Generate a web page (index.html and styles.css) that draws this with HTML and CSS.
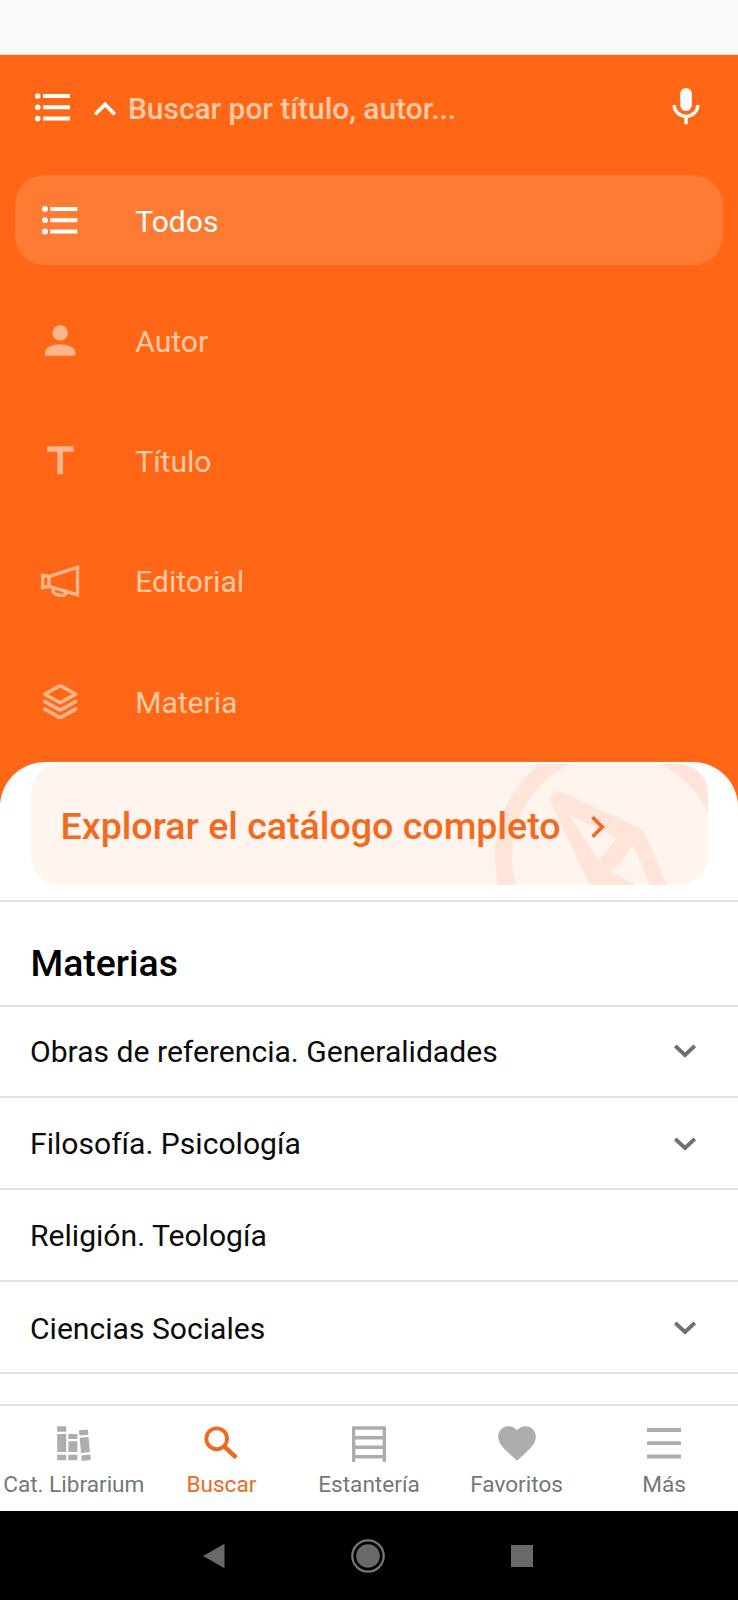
FILE: index.html
```html
<!DOCTYPE html>
<html lang="es">
<head>
<meta charset="utf-8">
<title>Buscar</title>
<link rel="stylesheet" href="styles.css">
</head>
<body>
<div class="screen">
  <div class="status-bar"></div>
  <section class="search-panel">
    <header class="search-bar">
      <svg class="icon-list" width="36" height="30" viewBox="0 0 36 30" fill="currentColor"><circle cx="2.700" cy="4" r="2.800"/><circle cx="2.700" cy="15.300" r="2.800"/><circle cx="2.700" cy="26.600" r="2.800"/><path d="M8 2H35V6H8zM8 13.300H35V17.300H8zM8 24.600H35V28.600H8z"/></svg>
      <svg class="icon-up" width="24" height="16" viewBox="0 0 24 16" fill="none" stroke="currentColor" stroke-width="3.700"><path d="M2.200 13.200 12 3.400l9.800 9.800"/></svg>
      <span class="search-hint">Buscar por título, autor...</span>
      <svg class="icon-mic" width="28" height="38" viewBox="0 0 28 38"><rect x="8.200" y="1" width="11.600" height="23" rx="5.800" fill="currentColor"/><path d="M2.200 18a11.800 11.300 0 0 0 23.600 0M14 29v8.300" fill="none" stroke="currentColor" stroke-width="3.300"/></svg>
    </header>
    <ul class="filters">
      <li class="filter filter-active"><svg width="40" height="40" viewBox="0 0 40 40" fill="currentColor"><circle cx="5" cy="8.900" r="2.900"/><circle cx="5" cy="20.200" r="2.900"/><circle cx="5" cy="31.500" r="2.900"/><path d="M10.300 6.900h27v4h-27zM10.300 18.200h27v4h-27zM10.300 29.500h27v4h-27z"/></svg><span>Todos</span></li>
      <li class="filter"><svg width="40" height="40" viewBox="0 0 40 40" fill="currentColor"><circle cx="20.200" cy="12.900" r="7.700"/><path d="M5 35.700v-3.800c0-5 10.100-7.700 15.200-7.700s15.100 2.700 15.100 7.700v3.800z"/></svg><span>Autor</span></li>
      <li class="filter"><svg width="40" height="40" viewBox="0 0 40 40" fill="currentColor"><path d="M7 5.200h26.500v5.500H23v22.500h-5.700V10.700H7z"/></svg><span>Título</span></li>
      <li class="filter"><svg width="40" height="40" viewBox="0 0 40 40" fill="none" stroke="currentColor" stroke-width="3.300"><path d="M2.700 14.500 9 15.500 37.500 6.300V33.700L9 25.500l-6.300 1zM9 15v11M13 26.500v3.500c0 3.500 9.500 5.500 12 3.500l2.200-3.500"/></svg><span>Editorial</span></li>
      <li class="filter"><svg width="40" height="40" viewBox="0 0 40 40" fill="none" stroke="currentColor" stroke-width="3.600" stroke-linecap="round" stroke-linejoin="round"><path d="M4.800 13.200 18.800 5.400q1.400-.7 2.800 0l14 7.800-14 7.800q-1.400.7-2.800 0zM4.800 20.700l14 7.700q1.400.7 2.800 0l14-7.700M4.800 28.200l14 7.700q1.400.7 2.800 0l14-7.700"/></svg><span>Materia</span></li>
    </ul>
  </section>
  <main class="sheet">
    <a class="explore">
      <svg class="compass" width="240" height="121" viewBox="0 0 240 121"><circle cx="120" cy="93" r="111.500" fill="none" stroke="currentColor" stroke-width="17"/><path fill="currentColor" fill-rule="evenodd" d="M56 39C52 30 60 25.500 68 28.500L143 63.500Q148 66 150.500 71L172 121H95zM74.300 51 103.300 96 122.300 73.700zM138.300 81 116.700 108.300 141 121H155z"/></svg>
      <span class="explore-text">Explorar el catálogo completo</span>
      <svg class="icon-right" width="16" height="24" viewBox="0 0 16 24" fill="none" stroke="currentColor" stroke-width="3.700"><path d="M2.500 2.200 12.300 12l-9.800 9.800"/></svg>
    </a>
    <h2 class="section-title">Materias</h2>
    <ul class="subjects">
      <li class="subject"><span>Obras de referencia. Generalidades</span><svg class="icon-down" width="24" height="16" viewBox="0 0 24 16"><path d="M2.200 2.800 12 12l9.800-9.200"/></svg></li>
      <li class="subject"><span>Filosofía. Psicología</span><svg class="icon-down" width="24" height="16" viewBox="0 0 24 16"><path d="M2.200 2.800 12 12l9.800-9.200"/></svg></li>
      <li class="subject"><span>Religión. Teología</span></li>
      <li class="subject"><span>Ciencias Sociales</span><svg class="icon-down" width="24" height="16" viewBox="0 0 24 16"><path d="M2.200 2.800 12 12l9.800-9.200"/></svg></li>
    </ul>
  </main>
  <nav class="tabs">
    <a class="tab"><svg width="40" height="40" viewBox="0 0 40 40" fill="currentColor"><path d="M3.200 2.300h9v5.400h-9zM3.200 10h9v18h-9zM3.200 30.800h9v5.500h-9zM14.400 10h9v5h-9zM14.400 17.300h9V28h-9zM14.400 30.800h9v5.500h-9z"/><path transform="rotate(-5.500 31 21)" d="M26.300 5.800h9v5.200h-9zM26.300 13.300h9v15.200h-9zM26.300 31h9v5.500h-9z"/></svg><span>Cat. Librarium</span></a>
    <a class="tab tab-active"><svg width="40" height="40" viewBox="0 0 40 40" fill="none" stroke="currentColor" stroke-width="3.800"><circle cx="15.700" cy="14.700" r="10.400"/><path d="M23.300 22.500 35.300 33.700" stroke-width="4.500"/></svg><span>Buscar</span></a>
    <a class="tab"><svg width="40" height="40" viewBox="0 0 40 40" fill="none" stroke="currentColor" stroke-width="3.400"><path d="M4.700 38V4h30.600v34M4.700 13.700h30.600M4.700 23.300h30.600M4.700 32.700h30.600"/></svg><span>Estantería</span></a>
    <a class="tab"><svg width="40" height="40" viewBox="0 0 40 40" fill="currentColor"><path d="M20 36.800 17.300 34.300C7.500 25.500 1.200 19.800 1.200 12.700 1.200 7 5.700 2.300 11.500 2.300c3.300 0 6.400 1.500 8.500 3.900 2.100-2.400 5.200-3.900 8.500-3.900 5.800 0 10.300 4.700 10.300 10.400 0 7.100-6.300 12.800-16.100 21.600z"/></svg><span>Favoritos</span></a>
    <a class="tab"><svg width="40" height="40" viewBox="0 0 40 40" stroke="currentColor" stroke-width="3.800"><path d="M3 6h34M3 19.200h34M3 32.500h34"/></svg><span>Más</span></a>
  </nav>
  <footer class="system-nav">
    <svg width="22" height="26" viewBox="0 0 22 26" fill="currentColor"><path d="M0 13 21.500.7v24.600z"/></svg>
    <svg width="34" height="34" viewBox="0 0 34 34"><circle cx="17" cy="17" r="15.700" fill="none" stroke="#777" stroke-width="2.200"/><circle cx="17" cy="17" r="11.800" fill="currentColor"/></svg>
    <svg width="22" height="22" viewBox="0 0 22 22" fill="currentColor"><path d="M0 0h22v22H0z"/></svg>
  </footer>
</div>
</body>
</html>
```
FILE: styles.css
```css
* { box-sizing: border-box; }
body { margin: 0; font-family: Roboto, sans-serif; background: #fff; }
ul { list-style: none; margin: 0; padding: 0; }
svg { display: block; flex: none; }
.screen { width: 738px; height: 1600px; display: flex; flex-direction: column; overflow: hidden; background: #ff6716; }
.status-bar { height: 55px; background: #fafafa; border-bottom: 1px solid #fbdfc0; flex: none; }
.search-panel { height: 707px; flex: none; color: #fff; padding: 0 15px; }
.search-bar { height: 120px; padding: 0 23px 16px 20px; display: flex; align-items: center; }
.icon-up { margin-left: 22px; margin-top: 3px; }
.search-hint { margin-left: 11px; flex: 1; font-size: 29.900px; font-weight: 500; color: #ffcaa6; margin-top: 3px; white-space: nowrap; }
.icon-mic { margin-bottom: 2px; }
.filters { display: flex; flex-direction: column; gap: 30.300px; }
.filter { height: 90px; flex: none; display: flex; align-items: center; gap: 55.300px; padding-left: 25px; font-size: 30px; color: #ffb68d; }
.filter span { color: #ffcaa6; margin-top: 2px; }
.filter-active { background: #fd7b33; border-radius: 30px; color: #fff; }
.filter-active span { color: #fff; }
.sheet { height: 642px; flex: none; background: #fff; border-radius: 45px 45px 0 0; padding-top: 2px; overflow: hidden; }
.explore { position: relative; margin: 0 30px 0 30.500px; height: 121px; border-radius: 30px; background: #fff4ee; overflow: hidden; display: flex; align-items: center; padding-left: 30px; gap: 29px; color: #f26a21; }
.compass { position: absolute; left: 464px; top: 0; color: #ffe5d9; }
.explore-text { position: relative; font-size: 37.600px; font-weight: 500; white-space: nowrap; margin-top: 3px; }
.icon-right { position: relative; margin-top: 4px; }
.section-title { margin: 15px 0 0; height: 107px; border: solid #e0e0e0; border-width: 2px 0; padding: 17px 30.500px 0; font-size: 37.400px; line-height: 88px; font-weight: 500; color: #000; }
.subject { height: 92.300px; border-bottom: 2px solid #e0e0e0; padding: 2px 41px 0 30px; display: flex; align-items: center; justify-content: space-between; font-size: 30.100px; color: #0b0b0b; }
.subject:first-child { height: 90.500px; padding-top: 0; }
.icon-down { fill: none; stroke: #707070; stroke-width: 3.900px; }
.tabs { height: 107px; flex: none; background: #fff; border-top: 2px solid #e0e0e0; display: grid; grid-template-columns: repeat(5, 1fr); color: #adadad; }
.tab { display: flex; flex-direction: column; align-items: center; padding-top: 18px; font-size: 22.600px; white-space: nowrap; }
.tab span { color: #777; margin-top: 7px; line-height: 28px; }
.tab-active, .tab-active span { color: #ee6a21; }
.system-nav { height: 89px; flex: none; background: #000; color: #696969; display: flex; align-items: center; justify-content: center; padding-right: 2px; gap: 126px; }
```
